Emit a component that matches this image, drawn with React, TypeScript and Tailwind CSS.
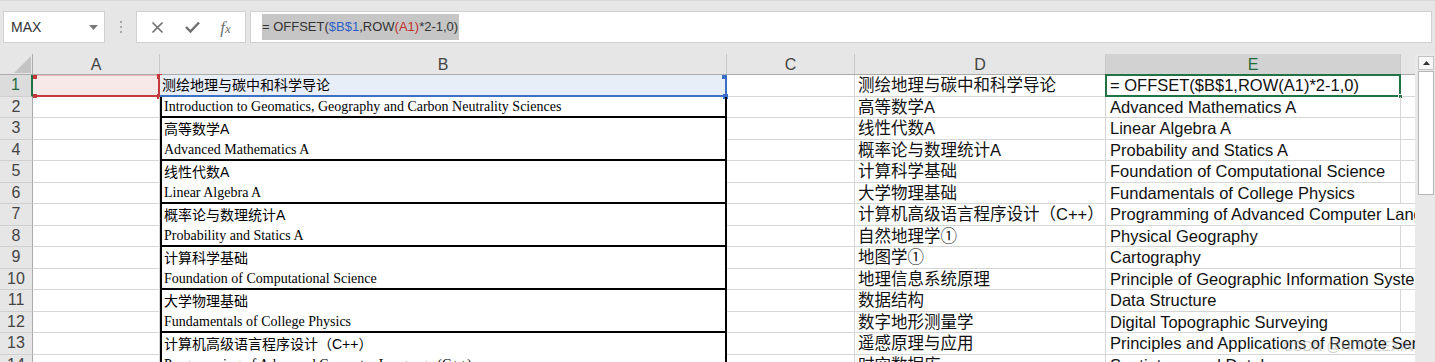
import React from "react";

type Row = { b: string; bcn: boolean; d: string; e: string; over?: boolean };

const rows: Row[] = [
  { b: "测绘地理与碳中和科学导论", bcn: true, d: "测绘地理与碳中和科学导论", e: "= OFFSET($B$1,ROW(A1)*2-1,0)" },
  { b: "Introduction to Geomatics, Geography and Carbon Neutrality Sciences", bcn: false, d: "高等数学A", e: "Advanced Mathematics A" },
  { b: "高等数学A", bcn: true, d: "线性代数A", e: "Linear Algebra A" },
  { b: "Advanced Mathematics A", bcn: false, d: "概率论与数理统计A", e: "Probability and Statics A" },
  { b: "线性代数A", bcn: true, d: "计算科学基础", e: "Foundation of Computational Science" },
  { b: "Linear Algebra A", bcn: false, d: "大学物理基础", e: "Fundamentals of College Physics" },
  { b: "概率论与数理统计A", bcn: true, d: "计算机高级语言程序设计（C++）", e: "Programming of Advanced Computer Language (C++)", over: true },
  { b: "Probability and Statics A", bcn: false, d: "自然地理学①", e: "Physical Geography" },
  { b: "计算科学基础", bcn: true, d: "地图学①", e: "Cartography" },
  { b: "Foundation of Computational Science", bcn: false, d: "地理信息系统原理", e: "Principle of Geographic Information System", over: true },
  { b: "大学物理基础", bcn: true, d: "数据结构", e: "Data Structure" },
  { b: "Fundamentals of College Physics", bcn: false, d: "数字地形测量学", e: "Digital Topographic Surveying" },
  { b: "计算机高级语言程序设计（C++）", bcn: true, d: "遥感原理与应用", e: "Principles and Applications of Remote Sensing", over: true },
  { b: "Programming of Advanced Computer Language (C++)", bcn: false, d: "时空数据库", e: "Spatiotemporal Database", over: true },
];

const sans = "font-['Liberation_Sans','Noto_Sans_CJK_SC',sans-serif]";

function Formula() {
  return (
    <>
      <span className="text-[#333]">= OFFSET(</span>
      <span className="text-[#2f5fc4]">$B$1</span>
      <span className="text-[#333]">,ROW</span>
      <span className="text-[#c0302a]">(A1)</span>
      <span className="text-[#333]">*2-1,0)</span>
    </>
  );
}

export default function App() {
  return (
    <div className={`w-[1435px] h-[362px] overflow-hidden bg-white ${sans} relative`}>
      {/* formula bar */}
      <div className="h-[54px] bg-[#e6e6e6] border-t border-t-[#d8d8d8] flex items-start pt-[10px] pl-[3px] pr-[3px]">
        <div className="w-[102px] h-[32px] bg-white border border-[#d0d0d0] flex items-center pl-[7px] pr-[6px] justify-between">
          <span className="text-[14px] text-[#333]">MAX</span>
          <svg width="9" height="5" viewBox="0 0 9 5"><path d="M0 0 L9 0 L4.5 5 Z" fill="#7a7a7a" /></svg>
        </div>
        <div className="w-[31px] h-[32px] flex flex-col items-center justify-center gap-[3px]">
          <span className="w-[2px] h-[2px] bg-[#a8a8a8]" />
          <span className="w-[2px] h-[2px] bg-[#a8a8a8]" />
          <span className="w-[2px] h-[2px] bg-[#a8a8a8]" />
        </div>
        <div className="w-[110px] h-[32px] bg-white border border-[#d0d0d0] flex items-center justify-around px-[4px]">
          <svg width="13" height="13" viewBox="0 0 13 13"><path d="M1.5 1.5 L11.5 11.5 M11.5 1.5 L1.5 11.5" stroke="#6e6e6e" strokeWidth="1.6" /></svg>
          <svg width="15" height="12" viewBox="0 0 15 12"><path d="M1 6 L5.5 10.5 L14 1.5" stroke="#6e6e6e" strokeWidth="2.4" fill="none" /></svg>
          <span className="font-['Liberation_Serif',serif] italic text-[17px] text-[#6e6e6e] leading-none">f<span className="text-[13px]">x</span></span>
        </div>
        <div className="ml-[4px] flex-1 h-[32px] bg-white border border-[#d0d0d0] flex items-center pl-[11px]">
          <span className="bg-[#c6c6c6] h-[26px] flex items-center text-[13px] pr-[1px] whitespace-nowrap">
            <Formula />
          </span>
        </div>
      </div>

      {/* sheet */}
      <div className="flex">
        <div className="w-[1415px] overflow-hidden shrink-0">
          {/* column headers */}
          <div className="flex h-[21px] bg-[#e6e6e6] border-b border-b-[#ababab] text-[16px] text-[#444]">
            <div className="w-[33px] shrink-0 border-r border-r-[#ababab] flex items-end justify-end pr-[1px] pb-[1px]">
              <svg width="17" height="17" viewBox="0 0 17 17"><path d="M17 0 L17 17 L0 17 Z" fill="#c4c4c4" /></svg>
            </div>
            <div className="w-[127px] shrink-0 border-r border-r-[#c8c8c8] flex items-center justify-center pt-[2px]">A</div>
            <div className="w-[567px] shrink-0 border-r border-r-[#c8c8c8] flex items-center justify-center pt-[2px]">B</div>
            <div className="w-[128px] shrink-0 border-r border-r-[#c8c8c8] flex items-center justify-center pt-[2px]">C</div>
            <div className="w-[251px] shrink-0 border-r border-r-[#c8c8c8] flex items-center justify-center pt-[2px]">D</div>
            <div className="w-[295px] shrink-0 border-r border-r-[#c8c8c8] bg-[#d2d2d2] text-[#1f6b3f] flex items-center justify-center pt-[2px]">E</div>
            <div className="w-[60px] shrink-0" />
          </div>

          {rows.map((r, i) => {
            const n = i + 1;
            const first = n === 1;
            const even = n % 2 === 0;
            return (
              <div key={n} className="flex h-[21.5px]">
                <div
                  className={`w-[33px] shrink-0 border-b border-b-[#cfcfcf] flex items-center justify-center text-[16px] ${
                    first ? "bg-[#dcdcdc] text-[#1f6b3f] border-r-2 border-r-[#217346]" : "bg-[#e6e6e6] text-[#444] border-r border-r-[#ababab]"
                  }`}
                >
                  {n}
                </div>
                {/* A */}
                <div className={`w-[127px] shrink-0 relative ${first ? "bg-[#f8e9e9]" : "border-r border-b border-[#d6d6d6]"}`}>
                  {first && (
                    <>
                      <div className="absolute inset-0 border-b-2 border-r-2 border-[#c4393b] border-t border-l border-t-[#e8b8b8] border-l-transparent" />
                      <div className="absolute left-0 top-0 w-[4px] h-[4px] bg-[#c4393b]" />
                      <div className="absolute left-0 bottom-[-1px] w-[4px] h-[4px] bg-[#c4393b]" />
                      <div className="absolute right-[-2px] top-[-1px] w-[5px] h-[5px] bg-[#c4393b]" />
                      <div className="absolute right-[-2px] bottom-[-2px] w-[5px] h-[5px] bg-[#c4393b]" />
                    </>
                  )}
                </div>
                {/* B */}
                <div
                  className={`w-[567px] shrink-0 relative flex items-center pl-[2px] pt-[1px] whitespace-nowrap overflow-hidden text-[14px] text-black ${
                    r.bcn ? "font-['Liberation_Sans','Noto_Sans_CJK_SC',sans-serif]" : "font-['Liberation_Serif','Noto_Serif_CJK_SC',serif] text-[#111a33]"
                  } ${
                    first
                      ? "bg-[#e8eef8] border-b-2 border-b-[#3c6fc6] border-r-2 border-r-[#3c6fc6]"
                      : `border-l-2 border-l-black border-r-2 border-r-black ${even ? "border-b-2 border-b-black" : ""}`
                  }`}
                >
                  {r.b}
                  {first && <div className="absolute right-[-2px] top-0 w-[5px] h-[4px] bg-[#3c6fc6]" />}
                </div>
                {/* C */}
                <div className="w-[128px] shrink-0 border-r border-b border-[#d6d6d6] relative">
                  {first && <div className="absolute left-[-4px] bottom-[-3px] w-[5px] h-[5px] bg-[#3c6fc6]" />}
                </div>
                {/* D */}
                <div className="w-[251px] shrink-0 border-r border-b border-[#d6d6d6] flex items-center pl-[3px] pt-[1px] text-[16.5px] text-[#111] whitespace-nowrap overflow-hidden">
                  {r.d}
                </div>
                {/* E */}
                <div
                  className={`w-[295px] shrink-0 border-b border-[#d6d6d6] flex items-center pl-[4px] pt-[1px] text-[16.5px] text-[#111] whitespace-nowrap relative ${
                    r.over ? "" : "border-r"
                  }`}
                >
                  {r.e}
                  {first && (
                    <>
                      <div className="absolute inset-[-1px] border-2 border-[#217346]" />
                      <div className="absolute right-[-3px] bottom-[-3px] w-[5px] h-[5px] bg-[#217346] border border-white" />
                    </>
                  )}
                </div>
                {/* F */}
                <div className="w-[60px] shrink-0 border-b border-[#d6d6d6]" />
              </div>
            );
          })}
        </div>

        {/* vertical scrollbar */}
        <div className="w-[20px] shrink-0 bg-[#e9e9e9] pl-[3px] pr-[1px] pt-[2px] h-[308px]">
          <div className="h-[14px] bg-[#f7f7f7] border border-[#c2c2c2] flex items-center justify-center">
            <svg width="7" height="4" viewBox="0 0 7 4"><path d="M0 4 L3.5 0 L7 4 Z" fill="#333" /></svg>
          </div>
          <div className="mt-[1px] h-[124px] bg-white border border-[#b5b5b5]" />
        </div>
      </div>

      {/* watermark */}
      <div className="absolute left-[1283px] top-[336px] text-[14px] text-[#a0a0a0] opacity-50 whitespace-nowrap font-['Liberation_Sans',sans-serif]">
        CSDN @HITCLEXIN
      </div>
    </div>
  );
}
